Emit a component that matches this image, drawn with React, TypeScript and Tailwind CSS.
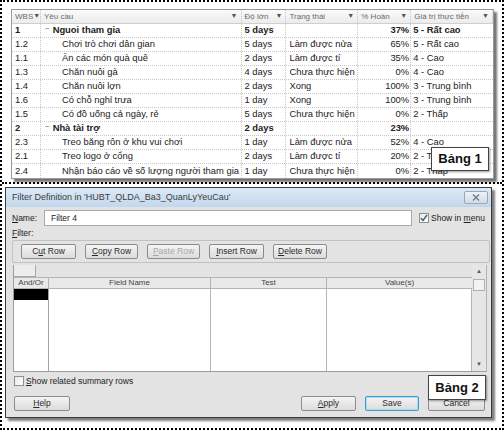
import React from "react";

type Row = {
  wbs: string;
  name: string;
  dur: string;
  status: string;
  pct: string;
  value: string;
  summary?: boolean;
};

const rows: Row[] = [
  { wbs: "1", name: "Nguoi tham gia", dur: "5 days", status: "", pct: "37%", value: "5 - Rất cao", summary: true },
  { wbs: "1.2", name: "Chơi trò chơi dân gian", dur: "5 days", status: "Làm được nửa", pct: "65%", value: "5 - Rất cao" },
  { wbs: "1.1", name: "Ăn các món quà quê", dur: "2 days", status: "Làm được tí", pct: "35%", value: "4 - Cao" },
  { wbs: "1.3", name: "Chăn nuôi gà", dur: "4 days", status: "Chưa thực hiện", pct: "0%", value: "4 - Cao" },
  { wbs: "1.4", name: "Chăn nuôi lợn", dur: "2 days", status: "Xong", pct: "100%", value: "3 - Trung bình" },
  { wbs: "1.6", name: "Có chỗ nghỉ trưa", dur: "1 day", status: "Xong", pct: "100%", value: "3 - Trung bình" },
  { wbs: "1.5", name: "Có đồ uống cả ngày, rẻ", dur: "5 days", status: "Chưa thực hiện", pct: "0%", value: "2 - Thấp" },
  { wbs: "2", name: "Nhà tài trợ", dur: "2 days", status: "", pct: "23%", value: "", summary: true },
  { wbs: "2.3", name: "Treo băng rôn ở khu vui chơi", dur: "1 day", status: "Làm được nửa", pct: "52%", value: "4 - Cao" },
  { wbs: "2.1", name: "Treo logo ở cổng", dur: "2 days", status: "Làm được tí", pct: "20%", value: "2 - Thấp" },
  { wbs: "2.4", name: "Nhận báo cáo về số lượng người tham gia", dur: "1 day", status: "Chưa thực hiện", pct: "0%", value: "2 - Thấp" },
];

const cell = "h-full flex items-center border-r border-dotted border-[#c8c8c8] overflow-hidden whitespace-nowrap";

function HeadCell({ label, w }: { label: string; w: string }) {
  return (
    <div className={`${cell} ${w} justify-between pl-[3px] pr-[3px]`}>
      <span>{label}</span>
      <span className="text-[7px] text-[#555]">▼</span>
    </div>
  );
}

function Btn({ children, w, disabled, primary }: { children: React.ReactNode; w: string; disabled?: boolean; primary?: boolean }) {
  return (
    <div
      className={`${w} h-[15px] flex items-center justify-center rounded-[2px] border text-[8.5px] bg-gradient-to-b from-[#f4f4f4] to-[#dcdcdc] ${
        primary ? "border-[#3c9ec8] shadow-[0_0_0_1px_#a9dcef_inset]" : "border-[#8c8c8c]"
      } ${disabled ? "text-[#a8a8a8]" : "text-[#2a2a2a]"}`}
    >
      {children}
    </div>
  );
}

function Check({ checked }: { checked?: boolean }) {
  return (
    <div className="w-[10px] h-[10px] border border-[#8e8f8f] bg-gradient-to-br from-[#e8e8e8] to-[#ffffff] flex items-center justify-center">
      {checked && (
        <svg width="8" height="8" viewBox="0 0 8 8">
          <path d="M1 4.2 L3 6.5 L7 1" stroke="#3a5a7a" strokeWidth="1.4" fill="none" />
        </svg>
      )}
    </div>
  );
}

export default function App() {
  return (
    <div className="w-[504px] h-[430px] bg-white border-2 border-dotted border-black flex flex-col text-[#222]" style={{ fontFamily: '"Liberation Sans", Arial, sans-serif' }}>
      {/* Bảng 1 */}
      <div className="relative h-[180px] pl-[9px] pt-[7px]">
        <div className="w-[483px] border border-[#9a9a9a] bg-white shadow-[3px_3px_2px_rgba(0,0,0,0.55)] text-[9.4px]">
          <div className="h-[14px] flex bg-gradient-to-b from-[#fafafa] to-[#ececec] text-[#6a6a6a] text-[8px] border-b border-[#cfcfcf]">
            <HeadCell label="WBS" w="w-[29px]" />
            <HeadCell label="Yêu cầu" w="w-[201px]" />
            <HeadCell label="Độ lớn" w="w-[45px]" />
            <HeadCell label="Trạng thái" w="w-[72px]" />
            <HeadCell label="% Hoàn" w="w-[53px]" />
            <HeadCell label="Giá trị thực tiễn" w="w-[82px]" />
          </div>
          {rows.map((r) => (
            <div key={r.wbs} className={`h-[14px] flex border-b border-dotted border-[#c8c8c8] last:border-b-0 ${r.summary ? "font-bold" : ""}`}>
              <div className={`${cell} w-[29px] pl-[3px]`}>{r.wbs}</div>
              <div className={`${cell} w-[201px] ${r.summary ? "pl-[4px]" : "pl-[21px]"}`}>
                {r.summary && <span className="text-[8px] text-[#777] mr-[3px] -mt-[4px] font-normal">−</span>}
                {r.name}
              </div>
              <div className={`${cell} w-[45px] pl-[3px]`}>{r.dur}</div>
              <div className={`${cell} w-[72px] pl-[3px]`}>{r.status}</div>
              <div className={`${cell} w-[53px] justify-end pr-[1px]`}>{r.pct}</div>
              <div className={`${cell} w-[82px] pl-[2px] border-r-0`}>{r.value}</div>
            </div>
          ))}
        </div>
        <div className="absolute left-[429px] top-[145px] w-[58px] h-[24px] bg-white border border-[#444] shadow-[1px_1px_2px_rgba(0,0,0,0.4)] flex items-center justify-center text-[13px] font-bold text-[#111]">
          Bảng 1
        </div>
      </div>

      <div className="h-[2px] border-t-2 border-dotted border-black" />

      {/* Bảng 2 */}
      <div className="relative flex-1 pl-[3px] pt-[3px]">
        <div className="w-[487px] h-[231px] border border-[#3b3b3b] bg-[#e3e3e3] shadow-[3px_3px_2px_rgba(0,0,0,0.5)] flex flex-col">
          <div className="h-[19px] flex items-center justify-between pl-[6px] pr-[3px] bg-gradient-to-b from-[#dce9f6] to-[#c3d7ec] text-[9px] text-[#3d3d3d]">
            <span>Filter Definition in 'HUBT_QLDA_Ba3_QuanLyYeuCau'</span>
            <div className="w-[24px] h-[13px] border border-[#9aa9b8] rounded-[2px] bg-gradient-to-b from-[#eef3f8] to-[#cfdbe7] flex items-center justify-center">
              <svg width="8" height="7" viewBox="0 0 8 7">
                <path d="M1 0.5 L7 6.5 M7 0.5 L1 6.5" stroke="#6f7b88" strokeWidth="1.3" />
              </svg>
            </div>
          </div>

          <div className="flex-1 flex flex-col pl-[6px] pr-[2px] text-[8.5px]">
            <div className="mt-[3px] h-[16px] flex items-center">
              <span className="w-[32px]"><span className="underline">N</span>ame:</span>
              <div className="w-[368px] h-[16px] border border-[#a9a9a9] bg-white flex items-center pl-[6px] text-[8.5px]">Filter 4</div>
              <div className="ml-[7px] flex items-center gap-[2px]">
                <Check checked />
                <span>Show in <span className="underline">m</span>enu</span>
              </div>
            </div>

            <div className="mt-[2px] h-[11px] flex items-center">
              <span><span className="underline">F</span>ilter:</span>
            </div>

            <div className="mt-[1px] h-[23px] w-[478px] border border-[#c2c2c2] rounded-[2px] flex items-center pl-[8px] gap-[9px]">
              <Btn w="w-[55px]">C<span className="underline">u</span>t Row</Btn>
              <Btn w="w-[53px]"><span className="underline">C</span>opy Row</Btn>
              <Btn w="w-[53px]" disabled><span className="underline">P</span>aste Row</Btn>
              <Btn w="w-[55px]"><span className="underline">I</span>nsert Row</Btn>
              <Btn w="w-[54px]"><span className="underline">D</span>elete Row</Btn>
            </div>

            <div className="mt-[2px] w-[474px] h-[107px] flex border-l border-b border-[#9c9c9c] ml-[1px]">
              <div className="flex-1 flex flex-col">
                <div className="h-[12px] flex">
                  <div className="w-[22px] border-r border-b border-[#a8a8a8] bg-[#ececec]" />
                </div>
                <div className="h-[12px] flex bg-[#e9e9e9] border-y border-[#b4b4b4] text-[8px] text-[#444]">
                  <div className="w-[35px] flex items-center justify-center border-r border-[#b4b4b4]">And/Or</div>
                  <div className="w-[162px] flex items-center justify-center border-r border-[#b4b4b4]">Field Name</div>
                  <div className="w-[116px] flex items-center justify-center border-r border-[#b4b4b4]">Test</div>
                  <div className="flex-1 flex items-center justify-center">Value(s)</div>
                </div>
                <div className="flex-1 flex bg-white">
                  <div className="w-[35px] border-r border-[#a4a4a4]">
                    <div className="h-[11px] bg-black" />
                  </div>
                  <div className="w-[162px] border-r border-[#b4b4b4]" />
                  <div className="w-[116px] border-r border-[#b4b4b4]" />
                  <div className="flex-1 border-r border-[#b4b4b4]" />
                </div>
              </div>
              <div className="w-[15px] flex flex-col items-center bg-[#e6e6e6] border-r border-[#b4b4b4]">
                <span className="mt-[2px] text-[6px] text-[#555]">▲</span>
                <div className="mt-[3px] w-[12px] h-[12px] border border-[#b0b0b0] bg-[#f2f2f2]" />
                <div className="flex-1" />
                <span className="mb-[2px] text-[6px] text-[#555]">▼</span>
              </div>
            </div>

            <div className="mt-[3px] h-[12px] flex items-center gap-[2px] pl-[2px] text-[8.5px]">
              <Check />
              <span><span className="underline">S</span>how related summary rows</span>
            </div>

            <div className="mt-[9px] flex items-center pl-[2px]">
              <Btn w="w-[56px]"><span className="underline">H</span>elp</Btn>
              <div className="flex-1" />
              <div className="flex gap-[9px] pr-[4px]">
                <Btn w="w-[55px]"><span className="underline">A</span>pply</Btn>
                <Btn w="w-[54px]" primary>Save</Btn>
                <Btn w="w-[57px]">Cancel</Btn>
              </div>
            </div>
          </div>
        </div>
        <div className="absolute left-[426px] top-[191px] w-[58px] h-[25px] bg-white border border-[#444] shadow-[1px_1px_2px_rgba(0,0,0,0.4)] flex items-center justify-center text-[13px] font-bold text-[#111]">
          Bảng 2
        </div>
      </div>
    </div>
  );
}
